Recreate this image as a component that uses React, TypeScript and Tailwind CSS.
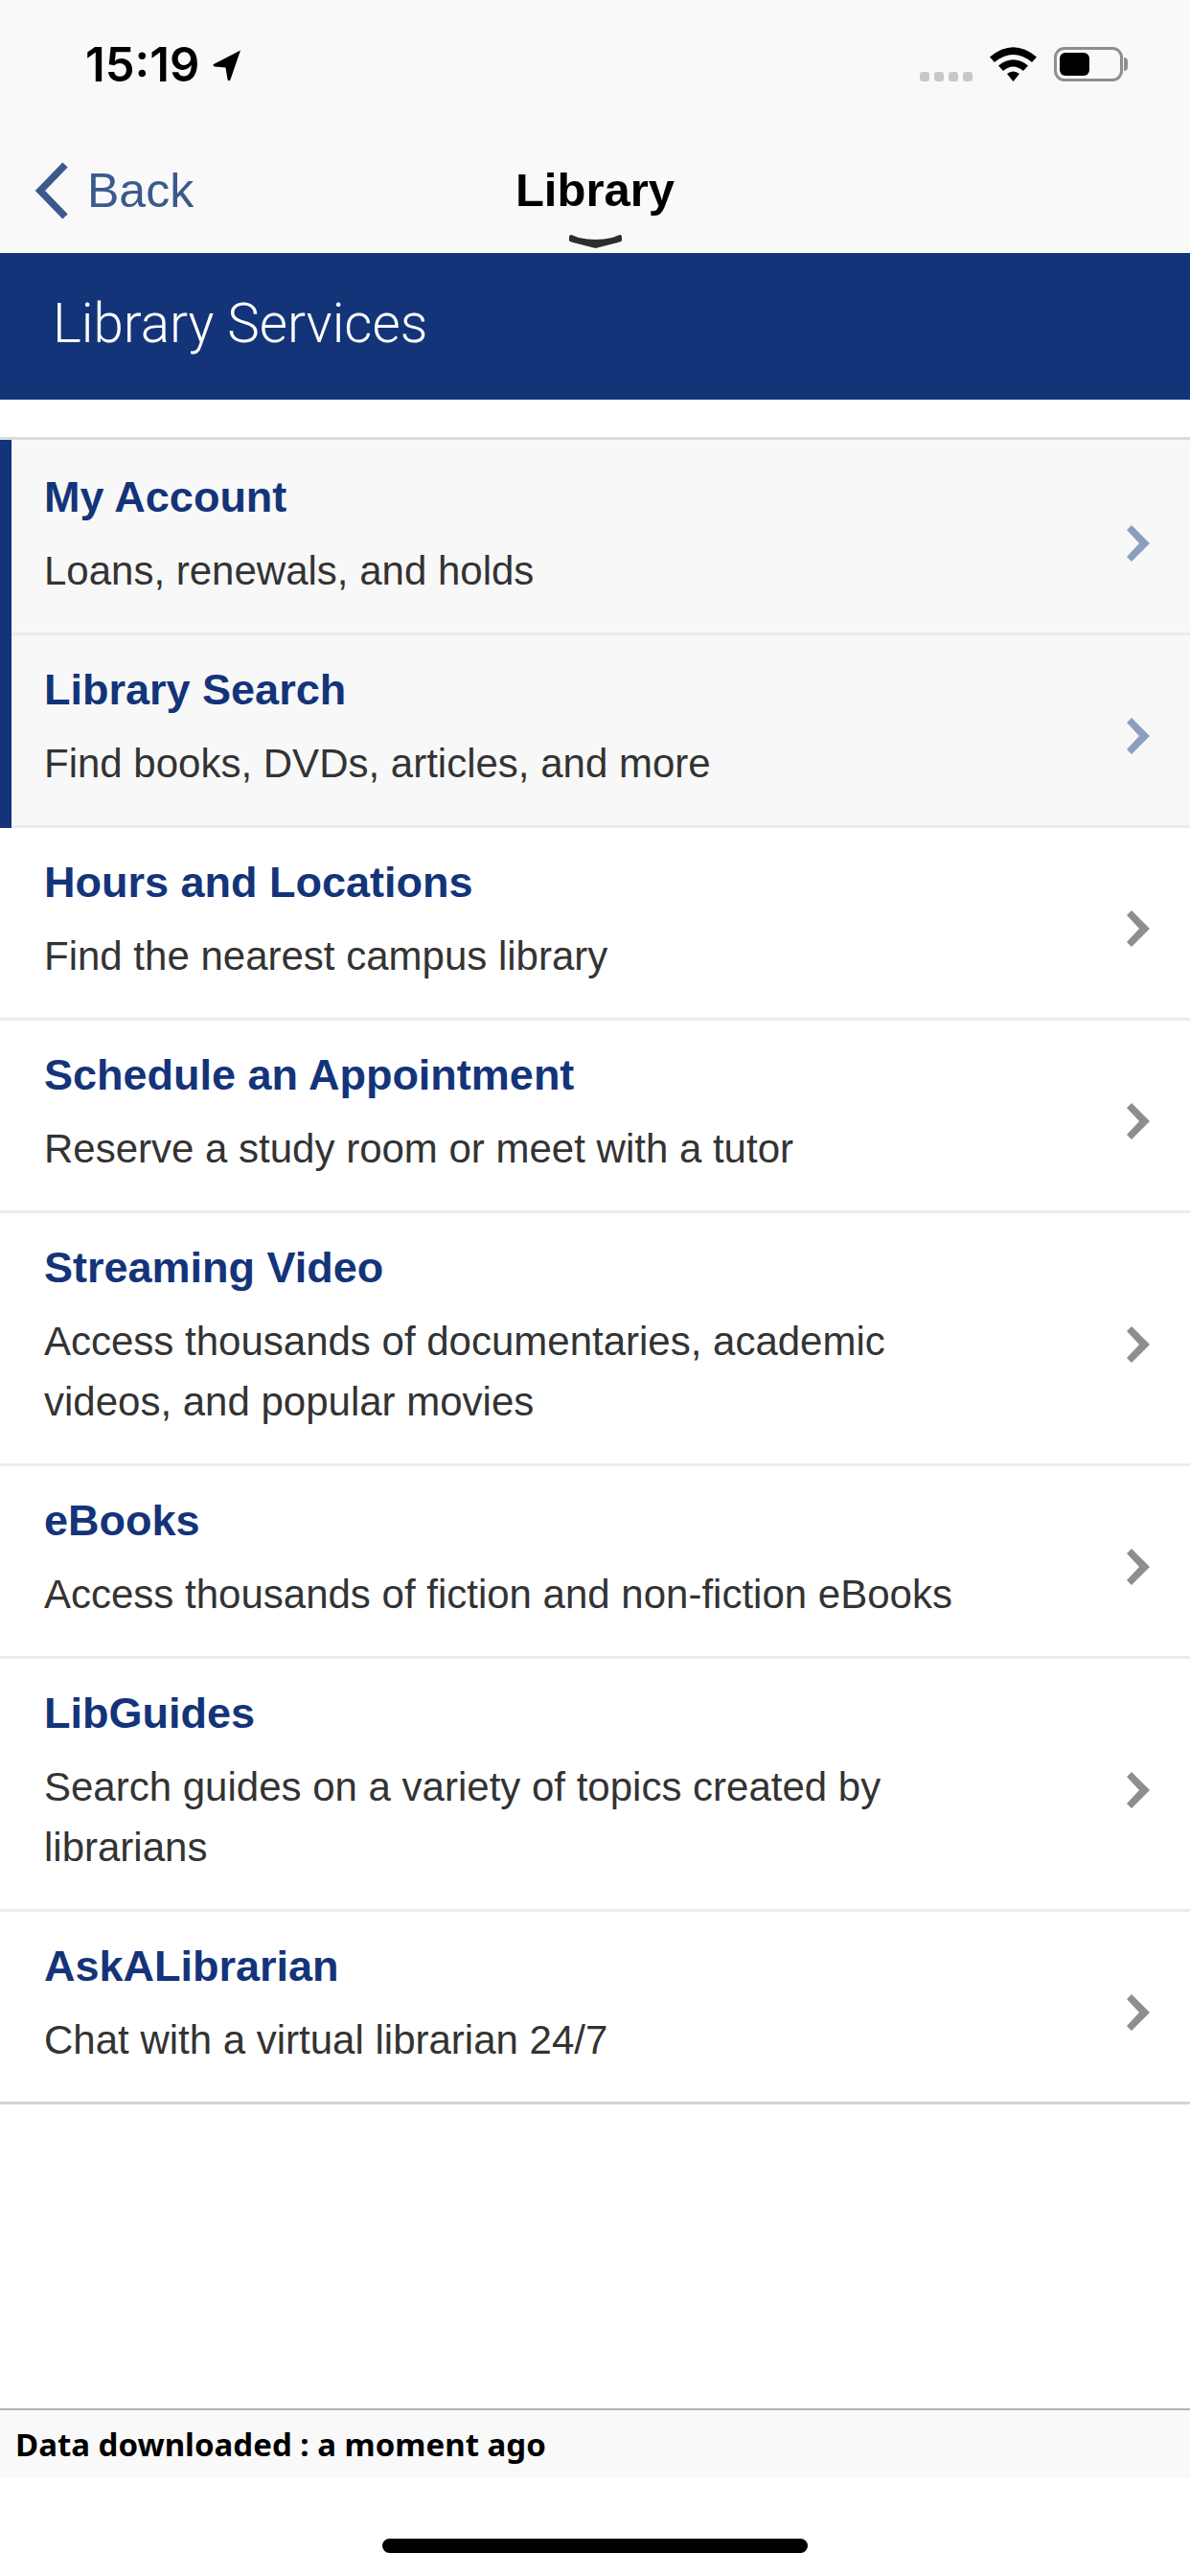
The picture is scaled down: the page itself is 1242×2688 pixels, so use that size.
type Row = {
  title: string
  lines: string[]
  active?: boolean
  last?: boolean
}

const rows: Row[] = [
  { title: "My Account", lines: ["Loans, renewals, and holds"], active: true },
  { title: "Library Search", lines: ["Find books, DVDs, articles, and more"], active: true },
  { title: "Hours and Locations", lines: ["Find the nearest campus library"] },
  { title: "Schedule an Appointment", lines: ["Reserve a study room or meet with a tutor"] },
  { title: "Streaming Video", lines: ["Access thousands of documentaries, academic", "videos, and popular movies"] },
  { title: "eBooks", lines: ["Access thousands of fiction and non-fiction eBooks"] },
  { title: "LibGuides", lines: ["Search guides on a variety of topics created by", "librarians"] },
  { title: "AskALibrarian", lines: ["Chat with a virtual librarian 24/7"], last: true },
]

function StatusBar() {
  return (
    <div className="h-[111px] pl-[89px] pr-[70px] pt-[42px] flex items-start justify-between">
      <div className="flex items-center h-[52px]">
        <span className="text-[49px] leading-[46px] font-semibold text-black font-['Inter',sans-serif]">15:19</span>
        <svg className="w-[30px] h-[33px] ml-[14px]" viewBox="0 0 30 33">
          <path d="M29 0.5 L1 15 Q-0.5 16.5 2 17.5 L13.5 18.5 L15.5 31 Q17 33.5 18.5 31 Z" fill="#000" />
        </svg>
      </div>
      <div className="flex items-start pt-[7px]">
        <div className="flex gap-[5px] mt-[26px] mr-[18px]">
          <div className="w-[10px] h-[10px] rounded-[3px] bg-[#c8c8c8]" />
          <div className="w-[10px] h-[10px] rounded-[3px] bg-[#c8c8c8]" />
          <div className="w-[10px] h-[10px] rounded-[3px] bg-[#c8c8c8]" />
          <div className="w-[10px] h-[10px] rounded-[3px] bg-[#c8c8c8]" />
        </div>
        <svg className="w-[49px] h-[36px] mr-[18px]" viewBox="0 0 49 36">
          <path d="M0 10.5 Q24.5 -10 49 10.5 L44 16 Q24.5 0 5 16 Z" fill="#000" />
          <path d="M9 19.5 Q24.5 7 40 19.5 L35 25 Q24.5 16 14 25 Z" fill="#000" />
          <path d="M18 28 Q24.5 23 31 28 L24.5 36 Z" fill="#000" />
        </svg>
        <div className="relative w-[72px] h-[36px] rounded-[11px] border-[3px] border-[#8e8e8e] p-[3px]">
          <div className="w-[31px] h-full rounded-[6px] bg-black" />
          <div className="absolute right-[-8px] top-[8px] w-[4px] h-[14px] rounded-r-[4px] bg-[#8e8e8e]" />
        </div>
      </div>
    </div>
  )
}

function NavBar() {
  return (
    <div className="relative h-[153px] flex items-start justify-center">
      <div className="absolute left-[36px] top-[58px] flex items-center">
        <svg className="w-[36px] h-[60px]" viewBox="0 0 36 60">
          <path d="M32 3 L6 30 L32 57" fill="none" stroke="#3b5a8c" strokeWidth="7.5" />
        </svg>
        <span className="ml-[19px] text-[50px] leading-[60px] text-[#3b5a8c]">Back</span>
      </div>
      <span className="mt-[57px] text-[49px] leading-[60px] font-bold text-black">Library</span>
      <svg className="absolute left-[594px] top-[134px] w-[55px] h-[14px]" viewBox="0 0 55 14">
        <path d="M2 0 Q0 0 0 3 L0 6 Q0 7 4 8 L27.5 14 L51 8 Q55 7 55 6 L55 3 Q55 0 53 0 Q50 1 45 3 Q27.5 7 10 3 Q5 1 2 0 Z" fill="#2d2d2d" />
      </svg>
    </div>
  )
}

function ListRow({ row }: { row: Row }) {
  return (
    <div className={`first:pt-[3px] ${row.active ? "bg-[#f8f8f8] border-l-[12px] border-[#14347a]" : ""}`}>
      <div className={`flex items-center justify-between border-b-[3px] pr-[42px] ${row.active ? "pl-[34px]" : "pl-[46px]"} ${row.last ? "border-[#d4d4d4]" : "border-[#ececec]"}`}>
        <div className="pt-[30px] pb-[33px]">
          <div className="text-[45px] leading-[54px] font-bold text-[#14347a]">{row.title}</div>
          <div className="mt-[18px] text-[42px] leading-[63px] text-[#333333]">
            {row.lines.map((line) => (
              <div key={line}>{line}</div>
            ))}
          </div>
        </div>
        <svg className={`w-[24px] h-[38px] mt-[12px] ${row.active ? "text-[#8a9fc0]" : "text-[#8e8e8e]"}`} viewBox="0 0 24 38">
          <path d="M0 5 L5 0 L24 19 L5 38 L0 33 L13 19 Z" fill="currentColor" />
        </svg>
      </div>
    </div>
  )
}

export default function App() {
  return (
    <div className="w-[1242px] h-[2688px] flex flex-col bg-white font-['Liberation_Sans',sans-serif]">
      <div className="bg-[#f9f9f9]">
        <StatusBar />
        <NavBar />
      </div>
      <div className="h-[153px] flex items-center pb-[6px] pl-[55px] bg-[#14347a] text-[56.5px] leading-[64px] font-light text-white font-['Roboto',sans-serif]">Library Services</div>
      <div className="h-[39px]" />
      <div className="border-t-[3px] border-[#dcdcdc]">
        {rows.map((row) => (
          <ListRow key={row.title} row={row} />
        ))}
      </div>
      <div className="flex-1" />
      <div className="h-[73px] flex items-center pl-[16px] border-t-[2px] border-[#b4b4b4] bg-[#f9f9f9] text-[33px] font-bold text-black font-['Noto_Sans',sans-serif]">Data downloaded : a moment ago</div>
      <div className="h-[102px] flex justify-center pt-[63px]">
        <div className="w-[444px] h-[15px] rounded-full bg-black" />
      </div>
    </div>
  )
}
